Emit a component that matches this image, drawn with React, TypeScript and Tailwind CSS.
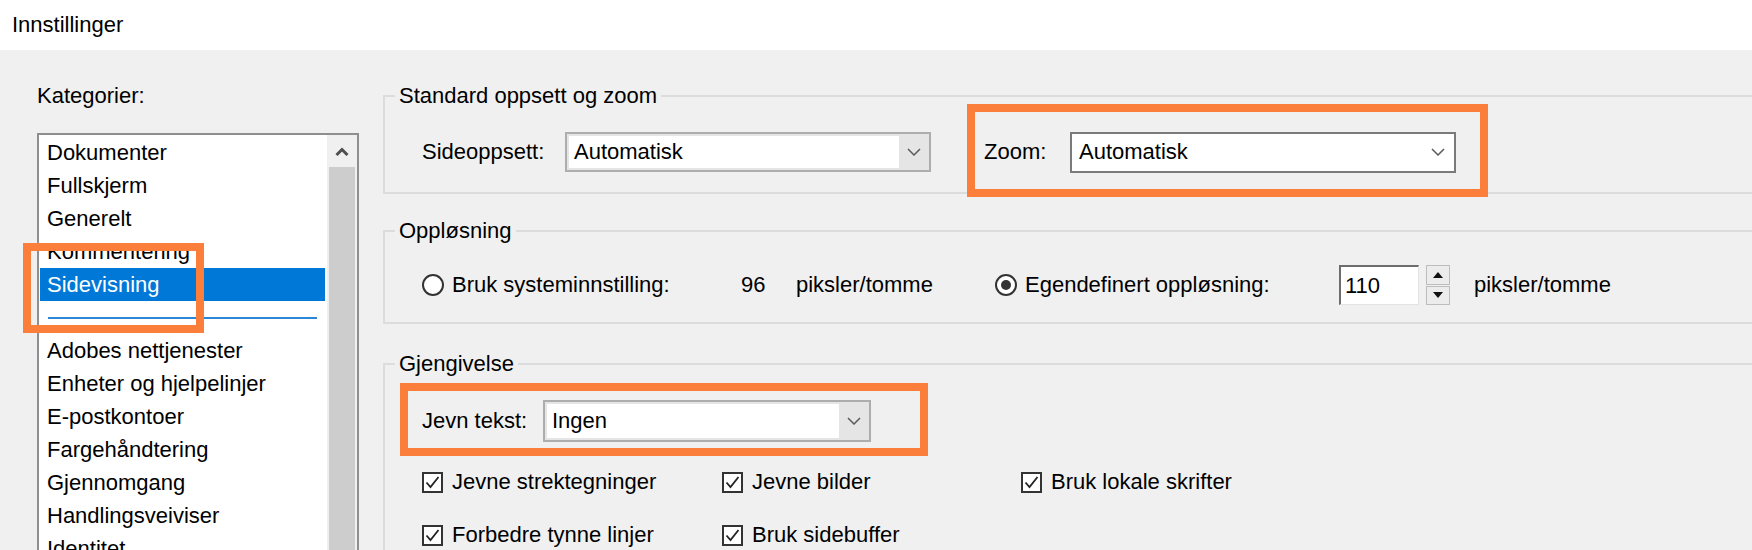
import type { ReactNode } from 'react';

const categories = [
  'Dokumenter',
  'Fullskjerm',
  'Generelt',
  'Kommentering',
  'Sidevisning',
  '---',
  'Adobes nettjenester',
  'Enheter og hjelpelinjer',
  'E-postkontoer',
  'Fargehåndtering',
  'Gjennomgang',
  'Handlingsveiviser',
  'Identitet',
];

const SELECTED = 'Sidevisning';

function DownChevron() {
  return (
    <svg width="14" height="8" viewBox="0 0 14 8" fill="none">
      <path d="M1 1 L7 7 L13 1" stroke="#5a5a5a" strokeWidth="1.5" />
    </svg>
  );
}

// Nedtrekksliste med grå knappedel (Sideoppsett / Jevn tekst)
function GreyCombo({ value, className }: { value: string; className: string }) {
  return (
    <div className={`flex border-2 border-[#adadad] bg-[#e5e5e5] py-[2px] pl-[2px] ${className}`}>
      <div className="flex flex-1 items-center bg-white pl-[5px]">{value}</div>
      <div className="flex w-[30px] items-center justify-center">
        <DownChevron />
      </div>
    </div>
  );
}

function Radio({ checked }: { checked?: boolean }) {
  return (
    <span className="flex h-[22px] w-[22px] shrink-0 items-center justify-center rounded-full border-2 border-[#333] bg-white">
      {checked && <span className="h-[10px] w-[10px] rounded-full bg-[#333]" />}
    </span>
  );
}

function Check({ label }: { label: string }) {
  return (
    <div className="flex h-[26px] items-center">
      <span className="flex h-[21px] w-[21px] shrink-0 items-center justify-center border-2 border-[#333] bg-white">
        <svg width="17" height="17" viewBox="0 0 17 17" fill="none">
          <path d="M2.5 8.5 L6.5 13 L14.5 3" stroke="#222" strokeWidth="1.8" />
        </svg>
      </span>
      <span className="ml-[9px] whitespace-nowrap">{label}</span>
    </div>
  );
}

function Group({ title, className, children }: { title: string; className: string; children: ReactNode }) {
  return (
    <fieldset className={`border-2 border-[#dcdcdc] pl-[10px] ${className}`}>
      <legend className="px-[4px] leading-[26px]">{title}</legend>
      <div className="pl-[27px]">{children}</div>
    </fieldset>
  );
}

export default function App() {
  return (
    <div className="relative h-[550px] w-[1752px] overflow-hidden bg-[#f0f0f0] font-['Liberation_Sans',Arial,sans-serif] text-[22px] leading-[26px] text-black">
      <div className="flex h-[50px] items-center bg-white pl-[12px]">Innstillinger</div>

      <div className="flex">
        {/* Kategorier */}
        <div className="w-[359px] shrink-0 pl-[37px] pt-[33px]">
          <div>Kategorier:</div>
          <div className="mt-[24px] flex h-[500px] border-2 border-[#8f8f8f] bg-white pl-[1px]">
            <ul className="w-[285px] pt-[1px]">
              {categories.map((c) =>
                c === '---' ? (
                  <li key={c} className="flex h-[33px] items-center px-[8px]">
                    <div className="h-[2px] w-full bg-[#2b86d8]" />
                  </li>
                ) : (
                  <li
                    key={c}
                    className={`h-[33px] whitespace-nowrap pl-[7px] leading-[33px] ${
                      c === SELECTED ? 'bg-[#0078d7] text-white' : ''
                    }`}
                  >
                    {c}
                  </li>
                ),
              )}
            </ul>
            <div className="ml-[2px] flex w-[30px] flex-col bg-[#f0f0f0]">
              <div className="flex h-[32px] items-center justify-center">
                <svg width="14" height="9" viewBox="0 0 14 9" fill="none">
                  <path d="M1.5 8 L7 2.5 L12.5 8" stroke="#4f4f4f" strokeWidth="3" />
                </svg>
              </div>
              <div className="mx-[2px] flex-1 bg-[#cdcdcd]" />
            </div>
          </div>
        </div>

        {/* Innstillinger for sidevisning */}
        <div className="mr-[-60px] flex-1 pl-[24px] pt-[33px]">
          <Group title="Standard oppsett og zoom" className="pt-[23px] pb-[20px]">
            <div className="flex h-[40px] items-center">
              <span className="w-[143px] shrink-0">Sideoppsett:</span>
              <GreyCombo value="Automatisk" className="h-[40px] w-[366px]" />
              <span className="ml-[53px] w-[86px] shrink-0">Zoom:</span>
              <div className="flex h-[41px] w-[386px] items-center justify-between border-2 border-[#7a7a7a] bg-white pl-[7px] pr-[9px]">
                <span>Automatisk</span>
                <DownChevron />
              </div>
            </div>
          </Group>

          <Group title="Oppløsning" className="mt-[24px] pt-[21px] pb-[17px]">
            <div className="flex h-[40px] items-center whitespace-nowrap">
              <Radio />
              <span className="ml-[8px] w-[289px] shrink-0">Bruk systeminnstilling:</span>
              <span className="w-[55px] shrink-0">96</span>
              <span className="w-[199px] shrink-0">piksler/tomme</span>
              <Radio checked />
              <span className="ml-[8px] w-[314px] shrink-0">Egendefinert oppløsning:</span>
              <div className="flex h-[40px] w-[80px] items-center border-l-2 border-t-2 border-r border-b border-l-[#6d6d6d] border-t-[#6d6d6d] border-r-[#e3e3e3] border-b-[#e3e3e3] bg-white pl-[4px]">
                110
              </div>
              <div className="ml-[7px] flex h-[40px] w-[24px] flex-col gap-[1px]">
                <div className="flex flex-1 items-center justify-center border border-[#bdbdbd] bg-[#ececec]">
                  <svg width="10" height="6" viewBox="0 0 10 6">
                    <path d="M0 6 L5 0 L10 6 Z" fill="#111" />
                  </svg>
                </div>
                <div className="flex flex-1 items-center justify-center border border-[#bdbdbd] bg-[#ececec]">
                  <svg width="10" height="6" viewBox="0 0 10 6">
                    <path d="M0 0 L5 6 L10 0 Z" fill="#111" />
                  </svg>
                </div>
              </div>
              <span className="ml-[24px]">piksler/tomme</span>
            </div>
          </Group>

          <Group title="Gjengivelse" className="mt-[27px] pt-[23px] pb-[40px]">
            <div className="flex h-[42px] items-center">
              <span className="w-[121px] shrink-0">Jevn tekst:</span>
              <GreyCombo value="Ingen" className="h-[42px] w-[328px]" />
            </div>
            <div className="mt-[27px] grid grid-cols-[300px_299px_299px] gap-y-[27px]">
              <Check label="Jevne strektegninger" />
              <Check label="Jevne bilder" />
              <Check label="Bruk lokale skrifter" />
              <Check label="Forbedre tynne linjer" />
              <Check label="Bruk sidebuffer" />
            </div>
          </Group>
        </div>
      </div>

      {/* Oransje markeringer over skjermbildet */}
      <div className="pointer-events-none absolute left-[23px] top-[243px] h-[90px] w-[181px] border-[8px] border-[#fb7f3a]" />
      <div className="pointer-events-none absolute left-[967px] top-[104px] h-[93px] w-[521px] border-[8px] border-[#fb7f3a]" />
      <div className="pointer-events-none absolute left-[400px] top-[383px] h-[73px] w-[528px] border-[8px] border-[#fb7f3a]" />
    </div>
  );
}
